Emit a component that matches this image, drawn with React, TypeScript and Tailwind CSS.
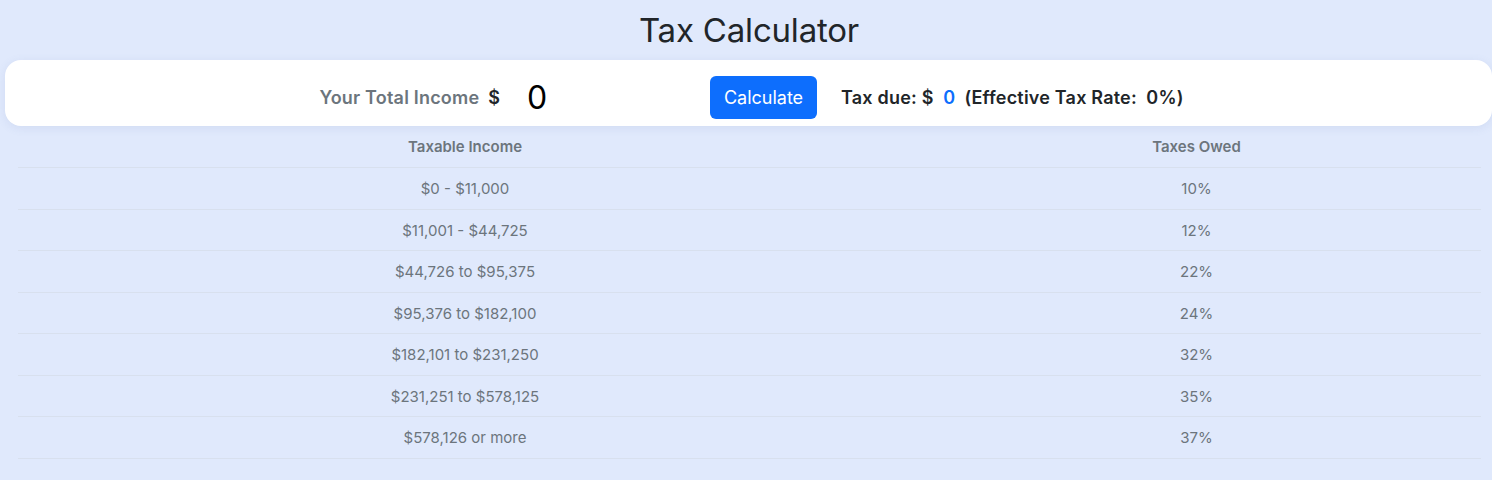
import { useState } from 'react';

const brackets = [
  { range: '$0 - $11,000', rate: '10%' },
  { range: '$11,001 - $44,725', rate: '12%' },
  { range: '$44,726 to $95,375', rate: '22%' },
  { range: '$95,376 to $182,100', rate: '24%' },
  { range: '$182,101 to $231,250', rate: '32%' },
  { range: '$231,251 to $578,125', rate: '35%' },
  { range: '$578,126 or more', rate: '37%' },
];

export default function App() {
  const [income, setIncome] = useState('0');

  return (
    <div
      className="min-h-[480px] w-full overflow-hidden bg-[#e0e9fc] text-[#212529]"
      style={{ fontFamily: 'Inter, "Liberation Sans", sans-serif' }}
    >
      <h1 className="pt-[10px] pl-[6px] text-center text-[33px] leading-[40px] font-normal tracking-[-0.2px]">
        Tax Calculator
      </h1>

      <div className="mt-[10px] ml-[5px] w-[1487px] h-[66px] pt-[9px] pl-[6px] rounded-[16px] bg-white shadow-[0_2px_10px_rgba(100,120,180,0.12)] flex items-center justify-center">
        <span className="text-[18px] font-semibold tracking-[0.2px] text-[#6c757d]">Your Total Income</span>
        <span className="ml-[9px] text-[18px] font-semibold text-[#212529]">$</span>
        <input
          value={income}
          onChange={(e) => setIncome(e.target.value)}
          className="ml-[17px] w-[193px] bg-transparent px-[10px] text-[32px] text-black outline-none"
        />
        <button className="h-[43px] w-[107px] rounded-[6px] bg-[#0d6efd] text-[18px] text-white">
          Calculate
        </button>
        <span className="ml-[24px] text-[18px] font-semibold tracking-[0.2px] text-[#212529]">
          Tax due: $ <span className="ml-[5px] text-[#0d6efd]">0</span>
          <span className="ml-[9px]">(Effective Tax Rate:&nbsp; 0%)</span>
        </span>
      </div>

      <div className="mx-[18px] pt-[1px] text-[15px] text-[#6c757d] w-[1463px]">
        <div className="grid grid-cols-[894px_1fr] h-[41px] items-center border-b border-[#d8e0ee] font-semibold">
          <div className="text-center">Taxable Income</div>
          <div className="text-center">Taxes Owed</div>
        </div>
        {brackets.map((b) => (
          <div
            key={b.range}
            className="grid grid-cols-[894px_1fr] h-[41.5px] pt-[2px] items-center border-b border-[#d8e0ee]"
          >
            <div className="text-center">{b.range}</div>
            <div className="text-center">{b.rate}</div>
          </div>
        ))}
      </div>
    </div>
  );
}
